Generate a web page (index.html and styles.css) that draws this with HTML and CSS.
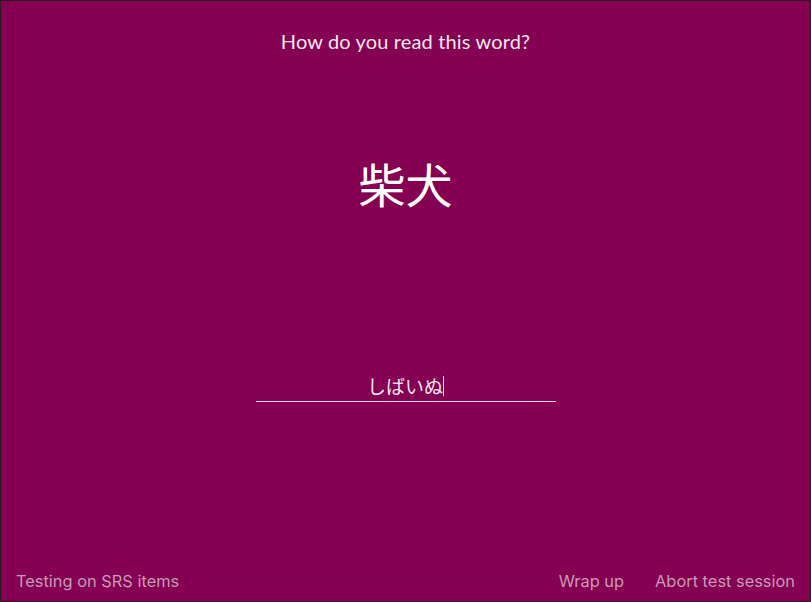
FILE: index.html
```html
<!DOCTYPE html>
<html lang="ja">
<head>
<meta charset="utf-8">
<link rel="stylesheet" href="styles.css">
</head>
<body>
<div class="screen">
  <main class="card">
    <p class="prompt">How do you read this word?</p>
    <div class="word">柴犬</div>
    <div class="answer">
      <span class="answer-text">しばいぬ</span><span class="caret"></span>
    </div>
  </main>
  <footer class="footer">
    <span class="link">Testing on SRS items</span>
    <div class="actions">
      <span class="link">Wrap up</span>
      <span class="link">Abort test session</span>
    </div>
  </footer>
</div>
</body>
</html>
```
FILE: styles.css
```css
html, body {
  margin: 0;
  padding: 0;
  height: 100%;
}
body {
  background: #850052;
}
.screen {
  box-sizing: border-box;
  height: 602px;
  border: 1px solid #2a1a22;
  display: flex;
  flex-direction: column;
  font-family: "Lato", "Noto Sans CJK JP", sans-serif;
  color: #f4e8ef;
}
.card {
  flex: 1;
  display: flex;
  flex-direction: column;
  align-items: center;
}
.prompt {
  margin: 28px 0 0;
  font-size: 20px;
  line-height: 24px;
  letter-spacing: 0.15px;
}
.word {
  margin-top: 100px;
  font-family: "Noto Sans CJK JP", sans-serif;
  font-size: 47px;
  line-height: 60px;
  color: #ffffff;
}
.answer {
  margin-top: 158px;
  width: 300px;
  border-bottom: 1px solid #f0dce8;
  display: flex;
  justify-content: center;
  align-items: center;
  height: 31px;
  box-sizing: border-box;
}
.answer-text {
  font-family: "Noto Sans CJK JP", sans-serif;
  font-size: 19px;
  line-height: 24px;
  color: #f4e8ef;
}
.caret {
  width: 1px;
  height: 20px;
  background: #f4e8ef;
}
.footer {
  display: flex;
  justify-content: space-between;
  align-items: center;
  padding: 0 15px 10px 15px;
  font-family: "Inter", "Liberation Sans", sans-serif;
  font-size: 16.4px;
  line-height: 20px;
  color: #c69bb7;
}
.actions {
  display: flex;
  gap: 31px;
}
```
